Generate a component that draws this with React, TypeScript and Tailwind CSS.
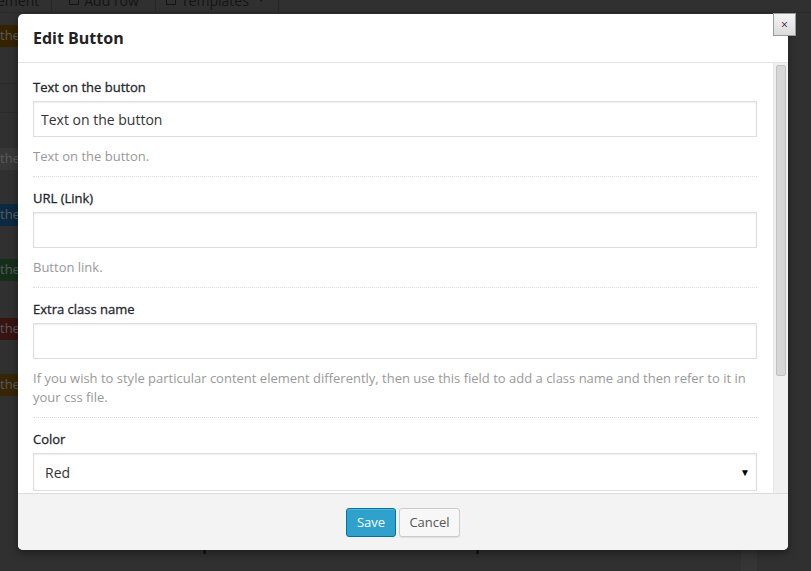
import React from 'react';

const font = { fontFamily: '"Open Sans", "Liberation Sans", sans-serif' };

interface FieldProps {
  label: string;
  value?: string;
  help?: string;
}

function Label({ children }: { children: React.ReactNode }) {
  return (
    <div className="text-[13px] leading-[18px] font-normal text-[#23282d] [-webkit-text-stroke:0.3px_#23282d]">
      {children}
    </div>
  );
}

function Field({ label, value, help }: FieldProps) {
  return (
    <div className="pt-[12px] pb-[10px] border-b border-dotted border-[#dcdcdc]">
      <Label>{label}</Label>
      <div className="mt-[5px] h-[36px] border border-[#ddd] shadow-[inset_0_1px_2px_rgba(0,0,0,0.07)] px-[7px] flex items-center text-[14px] text-[#333]">
        {value}
      </div>
      {help && <p className="mt-[10px] text-[13px] leading-[19px] text-[#999]">{help}</p>}
    </div>
  );
}

function LeftChip({ color, mt }: { color: string; mt: string }) {
  return (
    <div className={`${mt} ${color} h-[22px] w-[18px] flex items-center overflow-hidden text-[13px] text-[#5a5a5a] rounded-r-[2px]`}>
      the
    </div>
  );
}

export default function App() {
  return (
    <div className="relative w-[811px] h-[571px] overflow-hidden bg-[#303030]" style={font}>
      {/* dimmed page behind the modal */}
      <div className="h-[13px] flex items-end overflow-hidden border-b border-[#2a2a2a]">
        <div className="flex h-[28px] items-center text-[14px] text-[#141414] -mb-[2px]">
          <span className="pr-[12px] border-r border-[#262626] h-full flex items-center -ml-[3px]">ement</span>
          <span className="pl-[17px] pr-[16px] border-r border-[#262626] h-full flex items-center gap-[5px]">
            <span className="w-[10px] h-[9px] border border-[#141414] inline-block" />
            Add row
          </span>
          <span className="pl-[10px] pr-[13px] border-r border-[#262626] h-full flex items-center gap-[5px]">
            <span className="w-[10px] h-[9px] border border-[#141414] inline-block" />
            Templates
            <span className="text-[7px] ml-[4px]">▼</span>
          </span>
        </div>
      </div>
      <div className="flex flex-col">
        <LeftChip color="bg-[#352300]" mt="mt-[12px]" />
        <div className="mt-[36px] h-px w-[18px] bg-[#2a2a2a]" />
        <div className="mt-[28px] h-px w-[18px] bg-[#2a2a2a]" />
        <LeftChip color="bg-[#383838]" mt="mt-[35px]" />
        <LeftChip color="bg-[#0b2940]" mt="mt-[34px]" />
        <LeftChip color="bg-[#152e19]" mt="mt-[33px]" />
        <LeftChip color="bg-[#371311]" mt="mt-[37px]" />
        <LeftChip color="bg-[#372505]" mt="mt-[34px]" />
      </div>
      <div className="absolute left-[180px] top-[521px] text-[24px] text-[#0d0d0d] whitespace-nowrap">
        A preview from visual composer
      </div>
      <div className="absolute left-[741px] top-[520px] w-[16px] h-[60px] bg-[#353535]" />

      {/* modal */}
      <div className="absolute left-[18px] top-[14px] w-[770px] h-[536px] bg-white rounded-[5px] shadow-[0_3px_8px_rgba(0,0,0,0.4)] flex flex-col overflow-hidden">
        <div className="h-[49px] shrink-0 border-b border-[#e5e5e5] px-[15px] flex items-center">
          <h1 className="text-[16px] font-bold text-[#222]">Edit Button</h1>
        </div>
        <div className="flex-1 flex min-h-0">
          <div className="flex-1 pl-[15px] pr-[16px] pt-[3px] overflow-hidden">
            <Field label="Text on the button" value="Text on the button" help="Text on the button." />
            <Field label="URL (Link)" help="Button link." />
            <Field
              label="Extra class name"
              help="If you wish to style particular content element differently, then use this field to add a class name and then refer to it in your css file."
            />
            <div className="pt-[12px]">
              <Label>Color</Label>
              <div className="mt-[5px] h-[38px] border border-[#ddd] shadow-[inset_0_1px_2px_rgba(0,0,0,0.07)] pl-[11px] pr-[6px] flex items-center justify-between text-[14px] text-[#333]">
                <span>Red</span>
                <span className="text-[10px] text-black">▼</span>
              </div>
            </div>
          </div>
          <div className="w-[15px] shrink-0 bg-[#f0f0f0] border-l border-[#e6e6e6] pt-[2px] flex justify-center">
            <div className="w-[10px] h-[311px] bg-[#d7d7d7] border border-[#c2c2c2] rounded-[2px]" />
          </div>
        </div>
        <div className="h-[57px] shrink-0 bg-[#f3f3f3] border-t border-[#dcdcdc] flex items-start justify-center gap-[3px] pt-[14px]">
          <button className="h-[29px] w-[50px] bg-[#2ea2cc] border border-[#0074a2] rounded-[3px] text-white text-[13px] shadow-[inset_0_1px_0_rgba(120,200,230,0.5)]">
            Save
          </button>
          <button className="h-[29px] w-[61px] bg-[#f7f7f7] border border-[#cccccc] rounded-[3px] text-[#555] text-[13px] shadow-[0_1px_0_rgba(0,0,0,0.08)]">
            Cancel
          </button>
        </div>
      </div>
      <button className="absolute left-[773px] top-[13px] w-[23px] h-[23px] border border-[#9a9a9a] bg-gradient-to-b from-[#f4f4f4] to-[#dcdcdc] flex items-center justify-center text-[12px] leading-none text-[#4a2040]">
        ×
      </button>
    </div>
  );
}
